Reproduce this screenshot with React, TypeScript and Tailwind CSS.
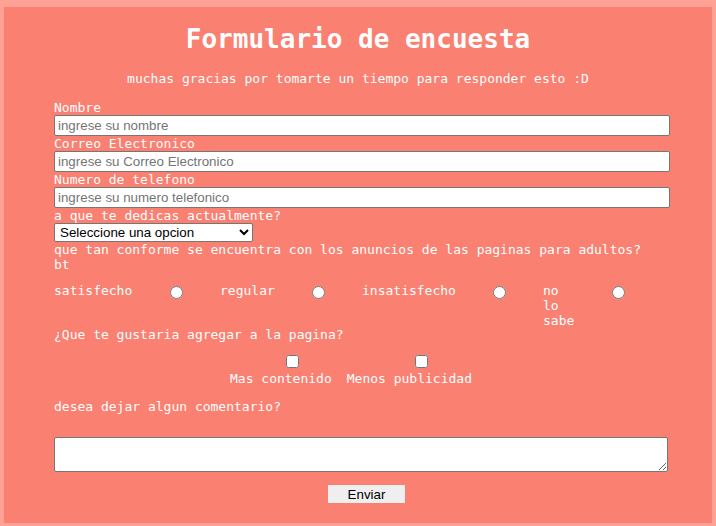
import React from "react";

const mono = "font-['DejaVu_Sans_Mono',monospace]";
const sans = "font-['Liberation_Sans',Arial,sans-serif]";

function TextInput({ placeholder }: { placeholder: string }) {
  return (
    <input
      type="text"
      placeholder={placeholder}
      className={`block w-[616px] h-[21px] border border-[#767676] rounded-[2px] bg-white pl-[3px] pr-[2px] text-[13.33px] leading-[15px] text-black placeholder:text-[#757575] ${sans}`}
    />
  );
}

export default function App() {
  return (
    <div className="w-[716px] h-[526px] bg-[#ffa194] pt-[7px] px-[4px]">
      <div className={`w-[708px] h-[516px] bg-[#fa8072] text-white text-[13px] leading-[15px] ${mono}`}>
        <h1 className="pt-[17px] text-center text-[26px] leading-[30px] font-bold">
          Formulario de encuesta
        </h1>
        <p className="mt-[17px] text-center">
          muchas gracias por tomarte un tiempo para responder esto :D
        </p>

        <div className="ml-[50px] w-[616px] mt-[14px]">
          <div>Nombre</div>
          <TextInput placeholder="ingrese su nombre" />
          <div>Correo Electronico</div>
          <TextInput placeholder="ingrese su Correo Electronico" />
          <div>Numero de telefono</div>
          <TextInput placeholder="ingrese su numero telefonico" />
          <div>a que te dedicas actualmente?</div>
          <select
            defaultValue=""
            className={`block w-[199px] h-[19px] border border-[#767676] rounded-[2px] bg-white text-black text-[13.33px] leading-[15px] pl-[1px] ${sans}`}
          >
            <option value="">Seleccione una opcion</option>
            <option value="estudio">Estudio</option>
            <option value="trabajo">Trabajo</option>
          </select>
          <div>
            que tan conforme se encuentra con los anuncios de las paginas para adultos?
            <br />
            bt
          </div>

          <div className="mt-[11px] flex items-start">
            <div className="w-[116px]">satisfecho</div>
            <input type="radio" name="conf" className="m-0 mt-[3px] w-[13px] h-[13px]" />
            <div className="ml-[37px] w-[92px]">regular</div>
            <input type="radio" name="conf" className="m-0 mt-[3px] w-[13px] h-[13px]" />
            <div className="ml-[37px] w-[131px]">insatisfecho</div>
            <input type="radio" name="conf" className="m-0 mt-[3px] w-[13px] h-[13px]" />
            <div className="ml-[37px] w-[69px]">
              <div className="w-[34px]">no lo sabe</div>
            </div>
            <input type="radio" name="conf" className="m-0 mt-[3px] w-[13px] h-[13px]" />
          </div>

          <div className="-mt-[1px]">¿Que te gustaria agregar a la pagina?</div>

          <div className="mt-[13px] flex">
            <div className="ml-[176px] flex flex-col items-start">
              <input type="checkbox" className="m-0 ml-[56px] w-[13px] h-[13px]" />
              <div className="mt-[3px]">Mas contenido</div>
            </div>
            <div className="ml-[15px] flex flex-col items-start">
              <input type="checkbox" className="m-0 ml-[68px] w-[13px] h-[13px]" />
              <div className="mt-[3px]">Menos publicidad</div>
            </div>
          </div>

          <div className="mt-[13px]">desea dejar algun comentario?</div>

          <textarea
            className={`block mt-[23px] w-[614px] h-[35px] border border-[#767676] rounded-[2px] bg-white text-black text-[13.33px] p-[2px] resize ${sans}`}
          />

          <button
            type="button"
            className={`block mt-[13px] ml-[274px] w-[77px] h-[18px] bg-[#efefef] text-black text-[13.33px] leading-[15px] ${sans}`}
          >
            Enviar
          </button>
        </div>
      </div>
    </div>
  );
}
